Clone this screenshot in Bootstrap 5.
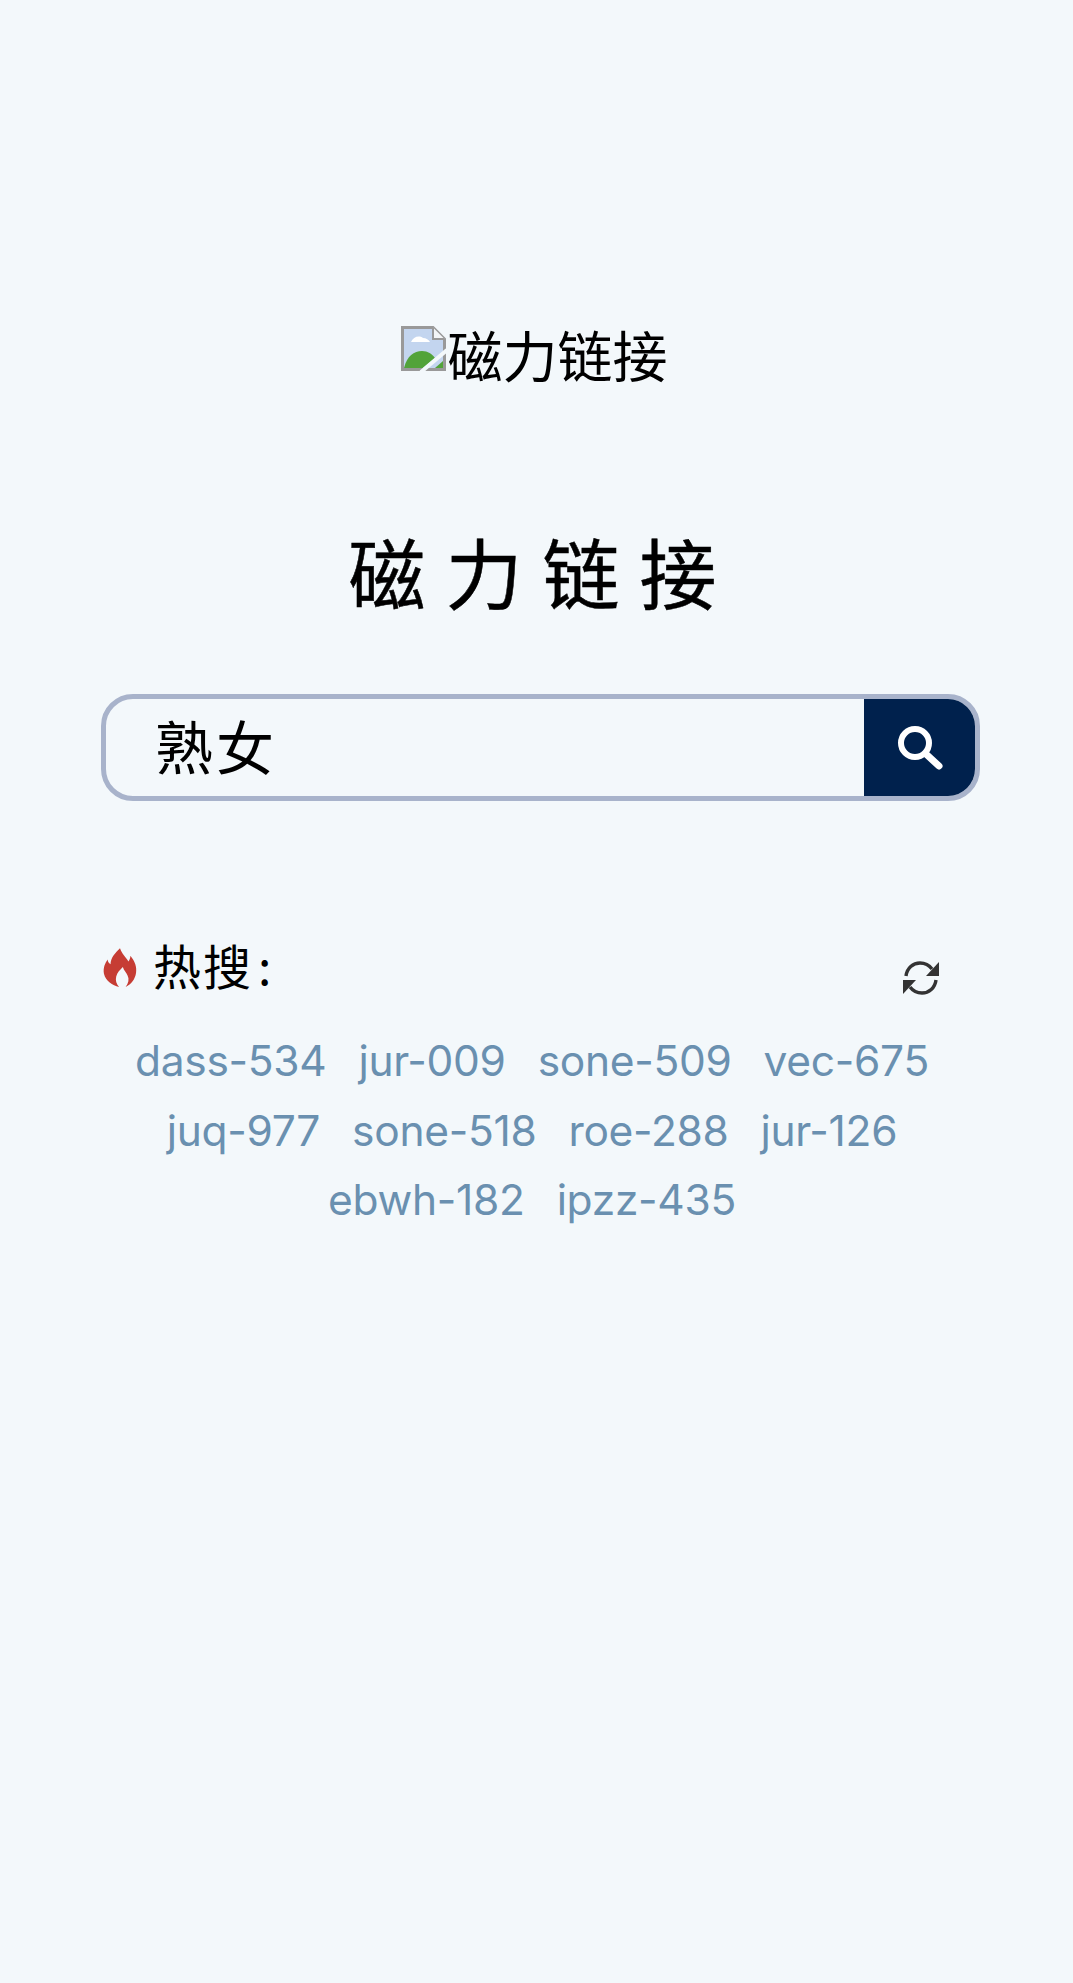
<!DOCTYPE html>
<html lang="zh">
<head>
  <meta charset="UTF-8">
  <meta name="viewport" content="width=device-width, initial-scale=1">
  <title>磁力链接</title>
  <link rel="stylesheet" href="https://cdn.jsdelivr.net/npm/bootstrap@5.3.0/dist/css/bootstrap.min.css">
  <style>
    html, body { height: 100%; }
    body { background: #f3f8fb; font-family: "Noto Sans CJK SC", "Noto Sans", sans-serif; color: #000; }
    .page-wrap { padding: 314px 92px 0 101px; }
    .logo-line { font-size: 55px; line-height: 78px; margin-left: -13px; }
    .logo-line svg { width: 45px; height: 45px; margin-top: 12px; margin-right: 1px; }
    .site-title { font-size: 77px; font-weight: 400; letter-spacing: 20px; line-height: 100px; margin: 129px 0 0 0; padding-left: 3px; -webkit-text-stroke: 0.5px #000; }
    .search-box { width: 879px; height: 107px; margin-top: 73px; border: 5px solid #a8b3cb; border-radius: 32px; overflow: hidden; }
    .search-box input { background: transparent; border: 0; outline: 0; box-shadow: none; font-size: 58px; letter-spacing: 3px; padding: 0 0 5px 49px; color: #000; }
    .search-box input:focus { background: transparent; box-shadow: none; }
    .search-go { width: 111px; background: #00214d; border: 0; border-radius: 0; }
    .search-go svg { width: 52px; height: 52px; }
    .hot-head { margin-top: 129px; height: 69px; width: 840px; }
    .hot-title { font-size: 48px; line-height: 69px; letter-spacing: 2px; }
    .hot-colon { margin-left: 5px; }
    .hot-flame { margin-top: 6px; margin-left: 2px; }
    .refresh-btn { background: none; border: 0; padding: 0; margin-top: 29px; margin-right: 2px; line-height: 1; }
    .tag-list { width: 862px; margin-top: 27px; column-gap: 32px; }
    .tag-list a { font-family: Inter, "Noto Sans", sans-serif; font-size: 42.5px; line-height: 69.5px; color: #6a90b0; text-decoration: none; letter-spacing: -0.3px; }
  </style>
</head>
<body>
  <div class="page-wrap">
    <div class="logo-line d-flex justify-content-center">
      <svg viewBox="0 0 45 45">
        <path d="M1.5 1.5H32L43.5 13V43.5H1.5Z" fill="#c3d5ef" stroke="#999" stroke-width="3"/>
        <path d="M32 1.5V13H43.5" fill="#f3f5f7" stroke="#999" stroke-width="2"/>
        <path d="M10 16c2-5 8-7 12-4 3 0 6 2 7 4Z" fill="#fff"/>
        <path d="M3 42c3-12 10-17 18-17 6 0 10 3 13 7L22 42Z" fill="#52a33a"/>
        <path d="M34 42l8-7v7Z" fill="#52a33a"/>
        <path d="M20 46L46 24" stroke="#f3f8fb" stroke-width="4"/>
      </svg>
      <span>磁力链接</span>
    </div>

    <h1 class="site-title text-center">磁力链接</h1>

    <form class="search-box d-flex" onsubmit="return false">
      <input type="text" class="form-control flex-grow-1 h-100" value="熟女">
      <button class="search-go btn d-flex flex-shrink-0 align-items-center justify-content-center" type="submit">
        <svg viewBox="0 0 52 52" fill="none" stroke="#fff" stroke-linecap="round">
          <circle cx="21" cy="21" r="14" stroke-width="6"/>
          <path d="M32 32L45 44" stroke-width="7"/>
        </svg>
      </button>
    </form>

    <div class="hot-head d-flex justify-content-between align-items-start">
      <div class="d-flex align-items-center">
        <svg width="34" height="42" viewBox="0 0 36 44" class="hot-flame me-3">
          <path d="M18 1c2 6 6 9 9 14 1-2 2-3 2-6 5 6 7 12 6 18-1 7-5 12-11 15 3-4 4-8 2-12-1-3-4-5-5-9-3 3-6 6-7 10-1 4 0 8 3 11C10 40 3 36 1 28c-1-6 1-11 4-15 0 2 1 4 3 5 0-7 5-12 10-17Z" fill="#c63d34"/>
        </svg>
        <span class="hot-title">热搜<span class="hot-colon">:</span></span>
      </div>
      <button class="refresh-btn" type="button" aria-label="刷新">
        <svg width="36" height="38" viewBox="0 0 36 38" fill="none" stroke="#333" stroke-width="3.4">
          <path d="M3 17C4 9 10 4 17 4c5 0 9 2 12 6"/>
          <path d="M36 3V17H23Z" fill="#333" stroke="none"/>
          <path d="M33 21c-1 8-7 13-14 13-5 0-9-2-12-6"/>
          <path d="M0 35V21H13Z" fill="#333" stroke="none"/>
        </svg>
      </button>
    </div>

    <div class="tag-list d-flex flex-wrap justify-content-center">
      <a href="#">dass-534</a>
      <a href="#">jur-009</a>
      <a href="#">sone-509</a>
      <a href="#">vec-675</a>
      <a href="#">juq-977</a>
      <a href="#">sone-518</a>
      <a href="#">roe-288</a>
      <a href="#">jur-126</a>
      <a href="#">ebwh-182</a>
      <a href="#">ipzz-435</a>
    </div>
  </div>
  <script src="https://cdn.jsdelivr.net/npm/bootstrap@5.3.0/dist/js/bootstrap.bundle.min.js"></script>
</body>
</html>
